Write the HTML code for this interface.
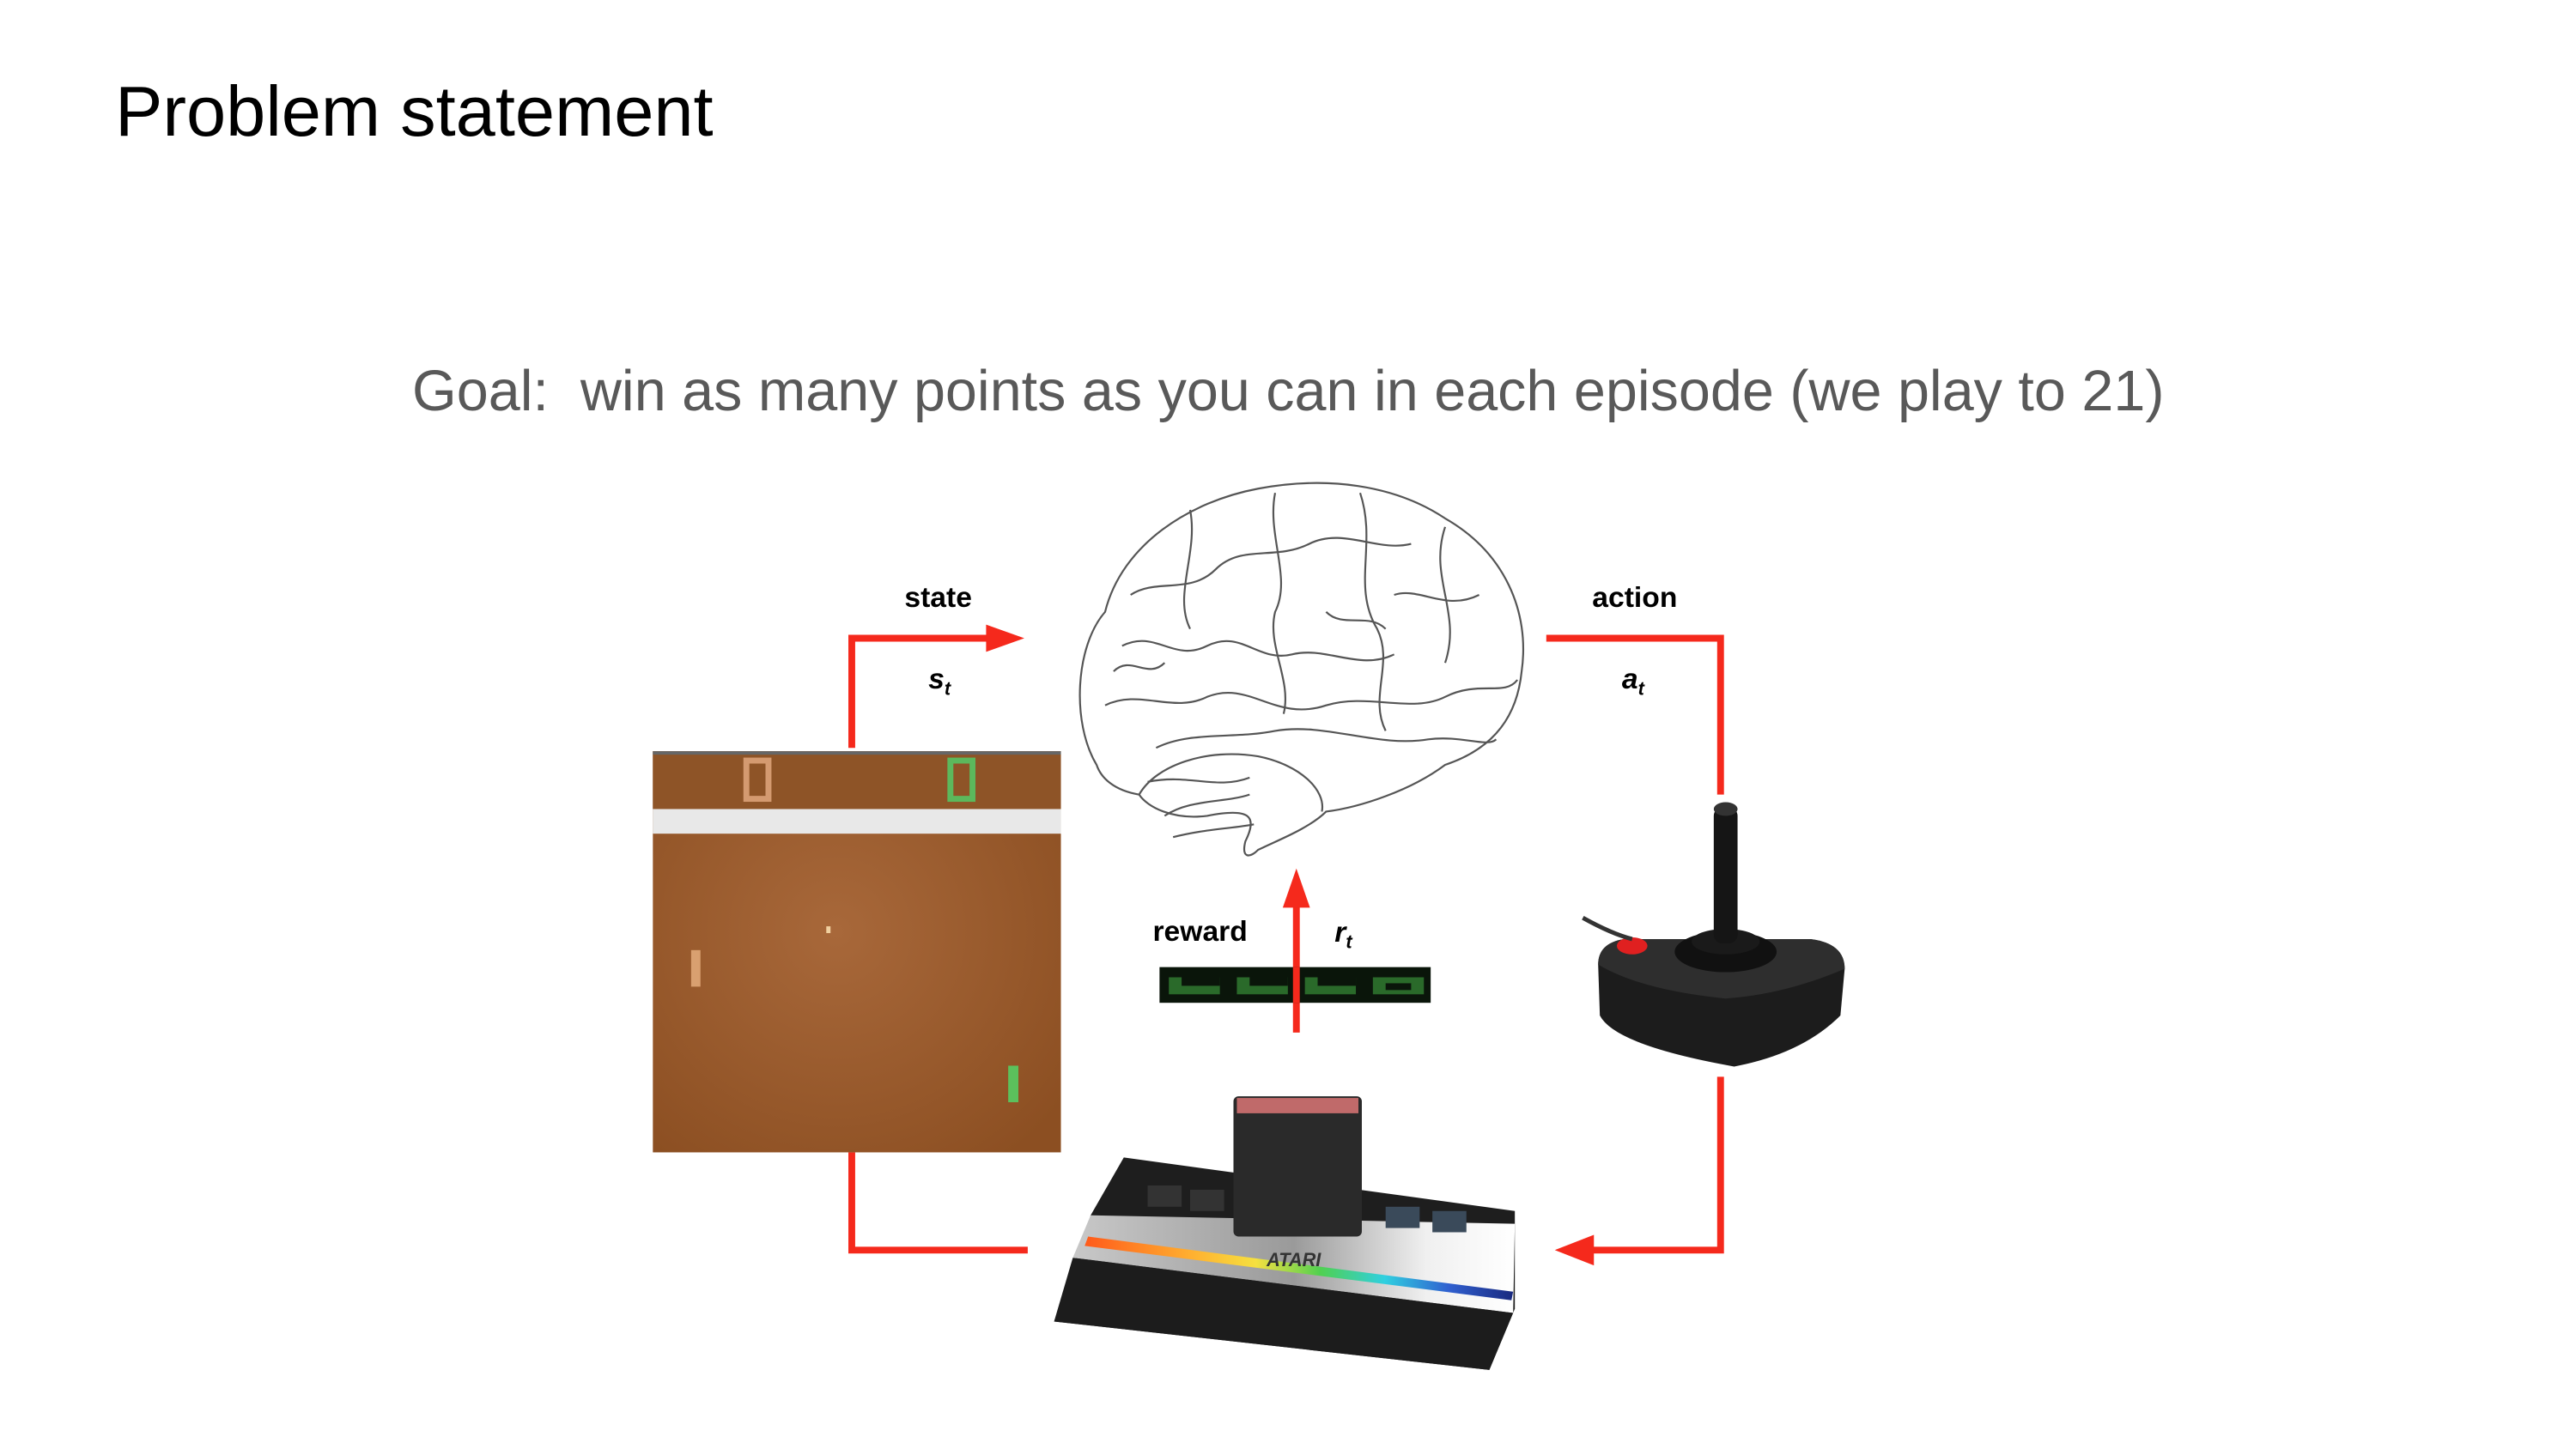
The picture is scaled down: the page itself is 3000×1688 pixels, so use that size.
<!DOCTYPE html>
<html><head><meta charset="utf-8"><style>
html,body{margin:0;padding:0;background:#fff;}
body{width:3000px;height:1688px;position:relative;overflow:hidden;font-family:"Liberation Sans",sans-serif;}
.t{position:absolute;white-space:nowrap;}
#dg{position:absolute;left:0;top:0;width:3000px;height:1688px;transform:scale(0.99);transform-origin:0 0;}
</style></head><body>
<div class="t" style="left:134px;top:82px;font-size:83px;color:#000;">Problem statement</div>
<div class="t" style="left:480px;top:418px;font-size:66.5px;color:#595959;">Goal:&nbsp; win as many points as you can in each episode (we play to 21)</div>

<div id="dg">
<svg width="3000" height="1688" style="position:absolute;left:0;top:0">
<defs>
<radialGradient id="pg" cx="0.45" cy="0.45" r="0.7"><stop offset="0" stop-color="#a8683a"/><stop offset="1" stop-color="#8c4f22"/></radialGradient>
<linearGradient id="rb" x1="0" x2="1"><stop offset="0" stop-color="#ff5a1a"/><stop offset="0.25" stop-color="#ffb030"/><stop offset="0.4" stop-color="#f5e040"/><stop offset="0.55" stop-color="#50d050"/><stop offset="0.7" stop-color="#30d0e0"/><stop offset="0.85" stop-color="#3060d0"/><stop offset="1" stop-color="#1a2a80"/></linearGradient>
<linearGradient id="sv" x1="0" x2="1"><stop offset="0" stop-color="#c8c8c8"/><stop offset="0.5" stop-color="#9a9a9a"/><stop offset="0.8" stop-color="#f0f0f0"/><stop offset="1" stop-color="#fff"/></linearGradient>
</defs>
<g stroke="#f5291c" stroke-width="8" fill="none">
<polyline points="1002,880 1002,751 1165,751"/>
<polyline points="1002,1356 1002,1471 1209,1471"/>
<polyline points="1819,751 2024,751 2024,935"/>
<polyline points="2024,1267 2024,1471 1870,1471"/>
<line x1="1525" y1="1215" x2="1525" y2="1060"/>
</g>
<g fill="#f5291c">
<polygon points="1160,735 1205,751 1160,767"/>
<polygon points="1875,1453 1829,1471 1875,1489"/>
<polygon points="1509,1068 1525,1022 1541,1068"/>
</g>
<rect x="768" y="884" width="480" height="472" fill="url(#pg)"/>
<rect x="768" y="884" width="480" height="68" fill="#8e5427"/>
<rect x="768" y="952" width="480" height="29" fill="#e8e8e8"/>
<rect x="768" y="884" width="480" height="4" fill="#666"/>
<rect x="878" y="895" width="26" height="45" fill="none" stroke="#d49a70" stroke-width="7"/>
<rect x="1118" y="895" width="26" height="45" fill="none" stroke="#5cb85c" stroke-width="7"/>
<rect x="813" y="1118" width="11" height="43" fill="#d9a070"/>
<rect x="1186" y="1254" width="12" height="43" fill="#5cc05c"/>
<rect x="972" y="1090" width="5" height="8" fill="#f0d0a0"/>
<rect x="1364" y="1138" width="319" height="42" fill="#0a150a"/>
<g fill="#2a6a2a"><rect x="1375" y="1150" width="60" height="20"/><rect x="1455" y="1150" width="60" height="20"/><rect x="1535" y="1150" width="60" height="20"/><rect x="1615" y="1150" width="60" height="20"/></g>
<g fill="#0a150a"><rect x="1390" y="1150" width="45" height="10"/><rect x="1470" y="1150" width="45" height="10"/><rect x="1550" y="1150" width="45" height="10"/><rect x="1630" y="1157" width="30" height="8"/></g>
<line x1="1525" y1="1138" x2="1525" y2="1180" stroke="#f5291c" stroke-width="8"/>
<g fill="none" stroke="#555" stroke-width="2.2">
<path d="M1290,900 C1260,850 1265,760 1300,720 C1320,640 1400,590 1480,575 C1560,560 1640,570 1700,610 C1770,650 1800,720 1790,790 C1785,840 1760,880 1700,900 C1660,930 1600,950 1560,955 C1540,975 1500,990 1480,1000 C1470,1010 1460,1010 1465,990 C1480,960 1470,950 1420,960 C1380,965 1350,950 1340,935 C1310,930 1295,915 1290,900 Z"/>
<path d="M1340,935 C1360,900 1420,880 1480,890 C1530,900 1560,930 1555,955"/>
<path d="M1320,760 C1360,740 1380,780 1420,760 C1460,740 1480,780 1520,770 C1560,760 1600,790 1640,770"/>
<path d="M1330,700 C1360,680 1400,700 1430,670 C1460,640 1500,660 1540,640 C1580,620 1620,650 1660,640"/>
<path d="M1300,830 C1340,810 1380,840 1420,820 C1470,800 1500,850 1560,830 C1610,815 1660,840 1700,820 C1740,800 1770,820 1785,800"/>
<path d="M1360,880 C1400,860 1450,870 1500,860 C1560,850 1620,880 1680,870 C1720,865 1750,880 1760,870"/>
<path d="M1400,600 C1410,650 1380,700 1400,740 M1500,580 C1490,630 1520,680 1500,720 C1490,760 1520,800 1510,840 M1600,580 C1620,640 1590,690 1620,740 C1640,780 1610,820 1630,860 M1700,620 C1680,680 1720,720 1700,780"/>
<path d="M1370,960 C1400,940 1440,945 1470,935 M1380,985 C1420,975 1450,975 1475,970"/>
<path d="M1310,790 C1330,770 1350,800 1370,780 M1640,700 C1670,690 1700,720 1740,700 M1560,720 C1580,740 1610,720 1630,740 M1350,920 C1400,910 1430,930 1470,915"/>
</g>
<path d="M1880,1135 Q1880,1110 1910,1105 L2130,1105 Q2170,1110 2170,1140 L2165,1195 Q2120,1240 2040,1255 Q1900,1230 1882,1195 Z" fill="#1c1c1c"/>
<path d="M1880,1135 Q1880,1110 1910,1105 L2130,1105 Q2170,1110 2170,1140 Q2100,1170 2030,1175 Q1930,1165 1880,1135 Z" fill="#2e2e2e"/>
<ellipse cx="2030" cy="1120" rx="60" ry="24" fill="#111"/>
<ellipse cx="2030" cy="1108" rx="40" ry="15" fill="#1a1a1a"/>
<rect x="2016" y="950" width="28" height="160" rx="10" fill="#151515"/>
<ellipse cx="2030" cy="952" rx="14" ry="8" fill="#333"/>
<ellipse cx="1920" cy="1113" rx="18" ry="10" fill="#e02020"/>
<path d="M1862,1080 C1880,1090 1900,1100 1920,1105" stroke="#333" stroke-width="5" fill="none"/>
<polygon points="1322,1362 1782,1425 1782,1540 1752,1612 1240,1555 1283,1430" fill="#1e1e1e"/>
<polygon points="1283,1430 1782,1440 1780,1545 1262,1480" fill="url(#sv)"/>
<polygon points="1280,1455 1780,1520 1778,1530 1276,1466" fill="url(#rb)"/>
<polygon points="1262,1480 1780,1545 1752,1612 1240,1555" fill="#1c1c1c"/>
<rect x="1350" y="1395" width="40" height="25" fill="#333"/><rect x="1400" y="1400" width="40" height="25" fill="#333"/>
<rect x="1630" y="1420" width="40" height="25" fill="#3a4a5a"/><rect x="1685" y="1425" width="40" height="25" fill="#3a4a5a"/>
<rect x="1451" y="1290" width="151" height="165" rx="6" fill="#2a2a2a"/>
<rect x="1455" y="1292" width="143" height="18" fill="#c06a6a"/>
<text x="1490" y="1490" font-size="22" font-style="italic" font-weight="bold" fill="#333" font-family="Liberation Sans">ATARI</text>
</svg>
<div class="t" style="left:1064px;top:684px;font-size:34px;font-weight:bold;">state</div>
<div class="t" style="left:1092px;top:780px;font-size:34px;font-weight:bold;font-style:italic;">s<sub style="font-size:22px">t</sub></div>
<div class="t" style="left:1873px;top:684px;font-size:34px;font-weight:bold;">action</div>
<div class="t" style="left:1908px;top:780px;font-size:34px;font-weight:bold;font-style:italic;">a<sub style="font-size:22px">t</sub></div>
<div class="t" style="left:1356px;top:1077px;font-size:34px;font-weight:bold;">reward</div>
<div class="t" style="left:1570px;top:1078px;font-size:34px;font-weight:bold;font-style:italic;">r<sub style="font-size:22px">t</sub></div>
</div>
</body></html>
